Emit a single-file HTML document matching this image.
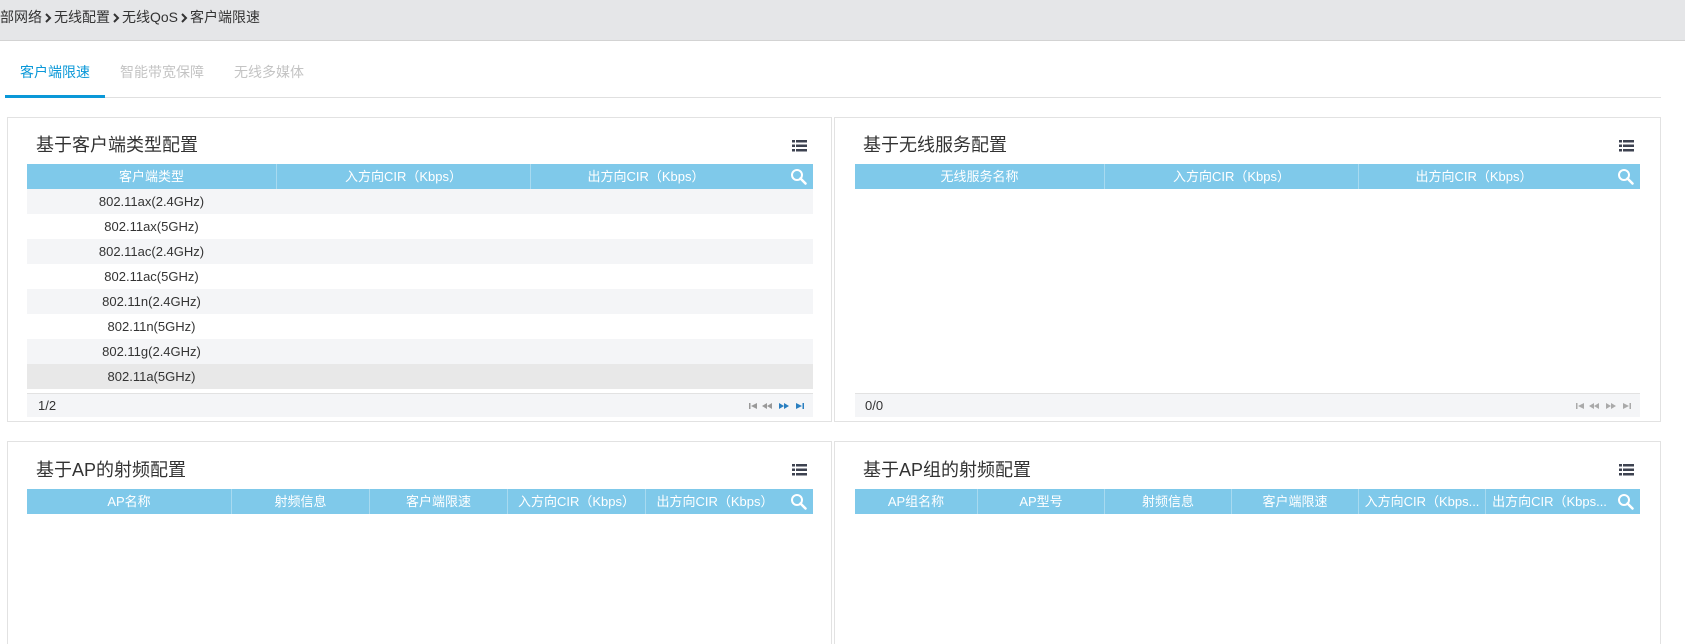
<!DOCTYPE html>
<html><head><meta charset="utf-8"><style>
*{margin:0;padding:0;box-sizing:border-box}
html,body{width:1685px;height:644px;overflow:hidden;background:#fff}
body{font-family:"Liberation Sans","Noto Sans CJK SC",sans-serif;color:#333;position:relative}
#wrap{position:absolute;left:0;top:0;width:1685px;height:644px;overflow:hidden}
.hdr{position:absolute;left:0;top:0;width:1685px;height:41px;background:#e5e6e8;border-bottom:1px solid #d3d3d3;font-size:14px;line-height:34px;color:#333;white-space:nowrap}
.hdr svg{margin:0 2px 0 3px;vertical-align:-1px}
.tab{position:absolute;top:0;white-space:nowrap}
.tline{position:absolute;left:5px;top:97px;width:1656px;height:1px;background:#e0e0e0}
.tact{position:absolute;left:5px;top:95px;width:100px;height:3px;background:#0a98d8}
.panel{position:absolute;border:1px solid #e2e2e2;background:#fff}
.title{position:absolute;left:28px;top:12px;font-size:18px;color:#333;white-space:nowrap}
.menu{position:absolute;width:15px;height:12px}
.th{position:absolute;height:25px;background:#7fc9ea;color:#fff;font-size:13px}
.th div{position:absolute;top:0;height:25px;line-height:25px;text-align:center;border-right:1px solid #a8daf0;white-space:nowrap;overflow:hidden}
.th div.last{border-right:none}
.th svg{position:absolute;right:6px;top:4px}
.row{position:absolute;height:25px;line-height:25px;font-size:13px;color:#333}
.row span{position:absolute;left:0;width:249px;text-align:center}
.foot{position:absolute;height:24px;background:#f4f5f7;border-top:1px solid #e2e2e2;font-size:13px;line-height:24px}
.pg{position:absolute;top:8px}
</style></head><body><div id="wrap">
<div class="hdr">部网络<svg width="7" height="10" viewBox="0 0 7 10"><path d="M1 1l4 4-4 4" stroke="#333" stroke-width="2" fill="none"/></svg>无线配置<svg width="7" height="10" viewBox="0 0 7 10"><path d="M1 1l4 4-4 4" stroke="#333" stroke-width="2" fill="none"/></svg>无线QoS<svg width="7" height="10" viewBox="0 0 7 10"><path d="M1 1l4 4-4 4" stroke="#333" stroke-width="2" fill="none"/></svg>客户端限速</div>
<div class="tab" style="left:20px;top:62px;font-size:14px;color:#0a98d8">客户端限速</div>
<div class="tab" style="left:120px;top:62px;font-size:14px;color:#c4c4c4">智能带宽保障</div>
<div class="tab" style="left:234px;top:62px;font-size:14px;color:#c4c4c4">无线多媒体</div>
<div class="tline"></div><div class="tact"></div>

<div class="panel" style="left:7px;top:117px;width:825px;height:305px">
 <div class="title" style="top:13px">基于客户端类型配置</div>
 <svg class="menu" style="left:784px;top:22px" viewBox="0 0 15 12"><g fill="#3d4250"><rect x="0" y="0" width="3" height="2.5"/><rect x="4" y="0" width="11" height="2.5"/><rect x="0" y="4.5" width="3" height="2.5"/><rect x="4" y="4.5" width="11" height="2.5"/><rect x="0" y="9" width="3" height="2.5"/><rect x="4" y="9" width="11" height="2.5"/></g></svg>
 <div class="th" style="left:19px;top:46px;width:786px">
  <div style="left:0;width:250px">客户端类型</div><div style="left:250px;width:254px">入方向CIR（Kbps）</div><div class="last" style="left:504px;width:230px">出方向CIR（Kbps）</div>
  <svg width="17" height="17" viewBox="0 0 17 17"><circle cx="7" cy="7" r="5" fill="none" stroke="#fff" stroke-width="2"/><path d="M10.5 10.5l5 5" stroke="#fff" stroke-width="2.5" stroke-linecap="round"/></svg>
 </div>
 <div class="row" style="left:19px;top:71px;width:786px;background:#f4f5f7"><span>802.11ax(2.4GHz)</span></div>
 <div class="row" style="left:19px;top:96px;width:786px"><span>802.11ax(5GHz)</span></div>
 <div class="row" style="left:19px;top:121px;width:786px;background:#f4f5f7"><span>802.11ac(2.4GHz)</span></div>
 <div class="row" style="left:19px;top:146px;width:786px"><span>802.11ac(5GHz)</span></div>
 <div class="row" style="left:19px;top:171px;width:786px;background:#f4f5f7"><span>802.11n(2.4GHz)</span></div>
 <div class="row" style="left:19px;top:196px;width:786px"><span>802.11n(5GHz)</span></div>
 <div class="row" style="left:19px;top:221px;width:786px;background:#f4f5f7"><span>802.11g(2.4GHz)</span></div>
 <div class="row" style="left:19px;top:246px;width:786px;background:#e8e8e8"><span>802.11a(5GHz)</span></div>
 <div class="foot" style="left:19px;top:275px;width:786px"><span style="margin-left:11px">1/2</span>
  <svg class="pg" style="left:722px" width="58" height="8" viewBox="0 0 58 8"><g fill="#999"><rect x="0" y="1" width="1.5" height="6"/><path d="M2 4l6-3v6z"/><path d="M13 4l5-3v6zM18 4l5-3v6z"/></g><g fill="#2a7fc0"><path d="M30 1l5 3-5 3zM35 1l5 3-5 3z"/><path d="M47 1l6 3-6 3z"/><rect x="53.5" y="1" width="1.5" height="6"/></g></svg></div>
</div>

<div class="panel" style="left:834px;top:117px;width:827px;height:305px">
 <div class="title" style="top:13px">基于无线服务配置</div>
 <svg class="menu" style="left:784px;top:22px" viewBox="0 0 15 12"><g fill="#3d4250"><rect x="0" y="0" width="3" height="2.5"/><rect x="4" y="0" width="11" height="2.5"/><rect x="0" y="4.5" width="3" height="2.5"/><rect x="4" y="4.5" width="11" height="2.5"/><rect x="0" y="9" width="3" height="2.5"/><rect x="4" y="9" width="11" height="2.5"/></g></svg>
 <div class="th" style="left:20px;top:46px;width:785px">
  <div style="left:0;width:250px">无线服务名称</div><div style="left:250px;width:254px">入方向CIR（Kbps）</div><div class="last" style="left:504px;width:230px">出方向CIR（Kbps）</div>
  <svg width="17" height="17" viewBox="0 0 17 17"><circle cx="7" cy="7" r="5" fill="none" stroke="#fff" stroke-width="2"/><path d="M10.5 10.5l5 5" stroke="#fff" stroke-width="2.5" stroke-linecap="round"/></svg>
 </div>
 <div class="foot" style="left:20px;top:275px;width:785px"><span style="margin-left:10px">0/0</span>
  <svg class="pg" style="left:721px" width="58" height="8" viewBox="0 0 58 8"><g fill="#aaa"><rect x="0" y="1" width="1.5" height="6"/><path d="M2 4l6-3v6z"/><path d="M13 4l5-3v6zM18 4l5-3v6z"/><path d="M30 1l5 3-5 3zM35 1l5 3-5 3z"/><path d="M47 1l6 3-6 3z"/><rect x="53.5" y="1" width="1.5" height="6"/></g></svg></div>
</div>

<div class="panel" style="left:7px;top:441px;width:825px;height:203px;border-bottom:none">
 <div class="title" style="top:14px">基于AP的射频配置</div>
 <svg class="menu" style="left:784px;top:22px" viewBox="0 0 15 12"><g fill="#3d4250"><rect x="0" y="0" width="3" height="2.5"/><rect x="4" y="0" width="11" height="2.5"/><rect x="0" y="4.5" width="3" height="2.5"/><rect x="4" y="4.5" width="11" height="2.5"/><rect x="0" y="9" width="3" height="2.5"/><rect x="4" y="9" width="11" height="2.5"/></g></svg>
 <div class="th" style="left:19px;top:47px;width:786px">
  <div style="left:0;width:205px">AP名称</div><div style="left:205px;width:138px">射频信息</div><div style="left:343px;width:138px">客户端限速</div><div style="left:481px;width:138px">入方向CIR（Kbps）</div><div class="last" style="left:619px;width:138px">出方向CIR（Kbps）</div>
  <svg width="17" height="17" viewBox="0 0 17 17"><circle cx="7" cy="7" r="5" fill="none" stroke="#fff" stroke-width="2"/><path d="M10.5 10.5l5 5" stroke="#fff" stroke-width="2.5" stroke-linecap="round"/></svg>
 </div>
</div>

<div class="panel" style="left:834px;top:441px;width:827px;height:203px;border-bottom:none">
 <div class="title" style="top:14px">基于AP组的射频配置</div>
 <svg class="menu" style="left:784px;top:22px" viewBox="0 0 15 12"><g fill="#3d4250"><rect x="0" y="0" width="3" height="2.5"/><rect x="4" y="0" width="11" height="2.5"/><rect x="0" y="4.5" width="3" height="2.5"/><rect x="4" y="4.5" width="11" height="2.5"/><rect x="0" y="9" width="3" height="2.5"/><rect x="4" y="9" width="11" height="2.5"/></g></svg>
 <div class="th" style="left:20px;top:47px;width:785px">
  <div style="left:0;width:123px">AP组名称</div><div style="left:123px;width:127px">AP型号</div><div style="left:250px;width:127px">射频信息</div><div style="left:377px;width:127px">客户端限速</div><div style="left:504px;width:127px">入方向CIR（Kbps...</div><div class="last" style="left:631px;width:127px">出方向CIR（Kbps...</div>
  <svg width="17" height="17" viewBox="0 0 17 17"><circle cx="7" cy="7" r="5" fill="none" stroke="#fff" stroke-width="2"/><path d="M10.5 10.5l5 5" stroke="#fff" stroke-width="2.5" stroke-linecap="round"/></svg>
 </div>
</div>
</div></body></html>
